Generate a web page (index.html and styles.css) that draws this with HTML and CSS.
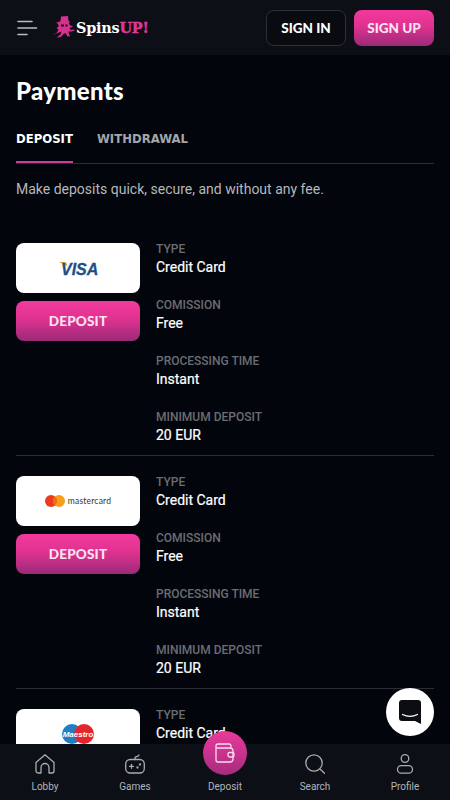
FILE: index.html
```html
<!DOCTYPE html>
<html lang="en">
<head>
    <meta charset="utf-8">
    <meta name="viewport" content="width=device-width, initial-scale=1.0">
    <title>Payments</title>
    <link rel="stylesheet" href="styles.css">
</head>
<body>
    <header class="topbar">
        <svg class="burger" width="22" height="16" viewBox="0 0 22 16" fill="none" stroke="#b9bcc2" stroke-width="1.6" stroke-linecap="round">
            <path d="M1 1.500h14M1 8h18.500M1 14.500h9"/>
        </svg>
        <div class="logo">
            <svg width="23" height="23" viewBox="0 0 23 23" fill="#d6318f">
                <path d="M8 .5l7-.5.500 5 1.500.500-1 1.500 1 2.500 3 .500-2 1.500-1.500.500 1 2 3-.500 1.500 1-3.500 1-3 0 .500 3 1.500 1.500-3 .500-2-3.500-2.500 1.500-2 2.500-4.500.500 4-3 1-3-4 1.500L0 19l4-2.500 1.500-3-2-1.500L6 10 4.500 7.500 3 6.500l3-.500L7.500 5z"/>
                <path d="M8 8.500h3v2H8zM12.500 8.500h2v2h-2z" fill="#0c0f16"/>
            </svg>
            <span class="logo-text">Spins<span class="logo-up">UP!</span></span>
        </div>
        <div class="auth">
            <a class="btn-signin">SIGN IN</a>
            <a class="btn-signup">SIGN UP</a>
        </div>
    </header>

    <main class="content">
        <h1 class="title">Payments</h1>
        <div class="tabs">
            <a class="tab tab-active">DEPOSIT</a>
            <a class="tab">WITHDRAWAL</a>
        </div>
        <p class="intro">Make deposits quick, secure, and without any fee.</p>

        <section class="method">
            <div class="method-left">
                <div class="card-logo">
                    <svg class="visa" width="40" height="16" viewBox="0 0 40 16">
                        <path d="M0 2.500c3-.6 6-.6 7.500.6l1 3.400C6.500 4.500 3.500 3.200 0 2.500z" fill="#eba61f"/>
                        <text x="2" y="14.500" class="visa-text">VISA</text>
                    </svg>
                </div>
                <a class="btn-deposit">DEPOSIT</a>
            </div>
            <dl class="info">
                <div class="info-row"><dt>TYPE</dt><dd>Credit Card</dd></div>
                <div class="info-row"><dt>COMISSION</dt><dd>Free</dd></div>
                <div class="info-row"><dt>PROCESSING TIME</dt><dd>Instant</dd></div>
                <div class="info-row"><dt>MINIMUM DEPOSIT</dt><dd>20 EUR</dd></div>
            </dl>
        </section>

        <section class="method">
            <div class="method-left">
                <div class="card-logo">
                    <svg width="20" height="12" viewBox="0 0 20 12">
                        <circle cx="6" cy="6" r="6" fill="#eb3b1b"/>
                        <circle cx="14" cy="6" r="6" fill="#f79e1b"/>
                        <path d="M10 1.500a6 6 0 0 1 0 9 6 6 0 0 1 0-9z" fill="#f26a14"/>
                    </svg>
                    <span class="mc-text">mastercard</span>
                </div>
                <a class="btn-deposit">DEPOSIT</a>
            </div>
            <dl class="info">
                <div class="info-row"><dt>TYPE</dt><dd>Credit Card</dd></div>
                <div class="info-row"><dt>COMISSION</dt><dd>Free</dd></div>
                <div class="info-row"><dt>PROCESSING TIME</dt><dd>Instant</dd></div>
                <div class="info-row"><dt>MINIMUM DEPOSIT</dt><dd>20 EUR</dd></div>
            </dl>
        </section>

        <section class="method">
            <div class="method-left">
                <div class="card-logo">
                    <svg width="32" height="20" viewBox="0 0 32 20">
                        <circle cx="10" cy="10" r="10" fill="#1f7fc4"/>
                        <circle cx="22" cy="10" r="10" fill="#e3262e"/>
                        <text x="16" y="12.500" class="maestro-text">Maestro</text>
                    </svg>
                </div>
            </div>
            <dl class="info">
                <div class="info-row"><dt>TYPE</dt><dd>Credit Card</dd></div>
            </dl>
        </section>
    </main>

    <a class="chat">
        <svg width="22" height="24" viewBox="0 0 22 24">
            <path d="M3 0h16a3 3 0 0 1 3 3v21l-6-3H3a3 3 0 0 1-3-3V3a3 3 0 0 1 3-3z" fill="#0b0d12"/>
            <path d="M3.500 14.500c4.500 2.200 10.500 2.200 15 0" fill="none" stroke="#fff" stroke-width="1.200" stroke-linecap="round"/>
        </svg>
    </a>

    <nav class="bottombar">
        <a class="nav-item">
            <svg width="20" height="20" viewBox="0 0 20 20" fill="none" stroke="#a9acb2" stroke-width="1.300" stroke-linejoin="round">
                <path d="M1 8.500 10 .8l9 7.700V17a2 2 0 0 1-2 2h-3v-5.500a4 4 0 0 0-8 0V19H3a2 2 0 0 1-2-2z"/>
            </svg>
            <span>Lobby</span>
        </a>
        <a class="nav-item">
            <svg width="20" height="20" viewBox="0 0 20 20" fill="none" stroke="#a9acb2" stroke-width="1.300" stroke-linecap="round">
                <rect x=".7" y="5.500" width="18.600" height="13.500" rx="4.500"/>
                <path d="M10 5.500V4c0-1 .8-1.300 2-1.500s2-.6 2-1.700M4.500 12.300h4M6.500 10.300v4"/>
                <circle cx="12.500" cy="13.500" r=".5"/>
                <circle cx="15" cy="10.500" r=".5"/>
            </svg>
            <span>Games</span>
        </a>
        <a class="nav-item nav-deposit">
            <span class="deposit-circle">
                <svg width="20" height="20" viewBox="0 0 20 20" fill="none" stroke="#fbdcee" stroke-width="1.300" stroke-linejoin="round">
                    <path d="M16 5V3a2 2 0 0 0-2-2H3a2 2 0 0 0-2 2v14a2 2 0 0 0 2 2h12a3 3 0 0 0 3-3V8a3 3 0 0 0-3-3H1"/>
                    <rect x="13" y="9.500" width="6" height="4.500" rx="1.500"/>
                </svg>
            </span>
            <span>Deposit</span>
        </a>
        <a class="nav-item">
            <svg width="20" height="20" viewBox="0 0 20 20" fill="none" stroke="#a9acb2" stroke-width="1.300" stroke-linecap="round">
                <circle cx="9" cy="9" r="8.200"/>
                <path d="M15.500 15.500l4 3.800"/>
            </svg>
            <span>Search</span>
        </a>
        <a class="nav-item">
            <svg width="20" height="20" viewBox="0 0 20 20" fill="none" stroke="#a9acb2" stroke-width="1.300">
                <circle cx="10" cy="4.500" r="3.800"/>
                <rect x="2.500" y="11.700" width="15" height="7.500" rx="3.750"/>
            </svg>
            <span>Profile</span>
        </a>
    </nav>
</body>
</html>
```

FILE: styles.css
```css
html {
    overflow: hidden;
}
body {
    font-family: 'Roboto', sans-serif;
    margin: 0;
    padding: 0;
    height: 800px;
    overflow: hidden;
    background-color: #02050c;
    color: #fff;
}
.topbar {
    height: 55px;
    box-sizing: border-box;
    background-color: #0c0f16;
    display: flex;
    align-items: center;
    padding: 0 16px 0 17px;
}
.burger {
    margin-right: 14px;
}
.logo {
    display: flex;
    align-items: center;
}
.logo-text {
    font-family: 'DejaVu Serif', serif;
    font-weight: 700;
    font-size: 14.400px;
    letter-spacing: -0.2px;
}
.logo-up {
    color: #e0379a;
    font-weight: 700;
    -webkit-text-stroke: 0.4px #e0379a;
}
.auth {
    margin-left: auto;
    display: flex;
    gap: 8px;
}
.btn-signin, .btn-signup {
    width: 80px;
    height: 36px;
    box-sizing: border-box;
    border-radius: 8px;
    display: flex;
    align-items: center;
    justify-content: center;
    font-family: 'Lato', sans-serif;
    font-weight: 900;
    font-size: 13.500px;
}
.btn-signin {
    border: 1px solid #2c3038;
    background-color: #090b11;
}
.btn-signup {
    background: linear-gradient(180deg, #f23a9e 0%, #e0328f 45%, #9a2a78 100%);
    color: #fbe3f1;
}
.content {
    padding: 0 16px;
    height: 745px;
    overflow: hidden;
}
.title {
    font-family: 'Lato', sans-serif;
    font-size: 24px;
    font-weight: 900;
    letter-spacing: 0.3px;
    margin: 23px 0 0;
    line-height: 26px;
}
.tabs {
    display: flex;
    gap: 24px;
    margin-top: 26px;
    border-bottom: 1px solid #2a2d34;
    height: 33px;
}
.tab {
    font-family: 'DejaVu Sans', sans-serif;
    font-size: 11.700px;
    font-weight: 700;
    color: #a3a5aa;
    line-height: 15px;
    padding-top: 2px;
    box-sizing: border-box;
    height: 33px;
}
.tab-active {
    color: #fff;
    border-bottom: 2px solid #c73f8f;
}
.intro {
    font-size: 14px;
    line-height: 20px;
    color: #b6b8bc;
    margin: 15px 0 0;
}
.method {
    display: flex;
    gap: 16px;
    border-bottom: 1px solid #2a2d34;
    height: 212px;
    margin-bottom: 20px;
}
.intro + .method {
    margin-top: 44px;
}
.method-left {
    width: 124px;
    flex-shrink: 0;
    display: flex;
    flex-direction: column;
    gap: 8px;
}
.card-logo {
    height: 50px;
    background-color: #fff;
    border-radius: 8px;
    display: flex;
    align-items: center;
    justify-content: center;
    gap: 3px;
}
.visa {
    margin-left: 2px;
}
.visa-text {
    font-family: 'Liberation Sans', sans-serif;
    font-style: italic;
    font-weight: 700;
    font-size: 16px;
    fill: #1c4f86;
    stroke: #1c4f86;
    stroke-width: 0.3px;
}
.mc-text {
    font-family: 'Lato', sans-serif;
    font-size: 8.500px;
    letter-spacing: 0.2px;
    color: #333;
}
.maestro-text {
    font-family: 'Liberation Sans', sans-serif;
    font-style: italic;
    font-weight: 700;
    font-size: 8px;
    fill: #fff;
    text-anchor: middle;
}
.btn-deposit {
    height: 40px;
    border-radius: 8px;
    background: linear-gradient(180deg, #f23a9e 0%, #e0328f 45%, #9a2a78 100%);
    display: flex;
    align-items: center;
    justify-content: center;
    font-family: 'Lato', sans-serif;
    font-weight: 900;
    font-size: 13.500px;
    letter-spacing: 0.2px;
    color: #fbe3f1;
}
.info {
    margin: 0;
    display: flex;
    flex-direction: column;
    gap: 22px;
}
.info-row dt {
    font-size: 12px;
    font-weight: 500;
    line-height: 12px;
    color: #6b6d73;
}
.info-row dd {
    margin: 3px 0 0;
    font-size: 14px;
    font-weight: 400;
    line-height: 19px;
    color: #fff;
    -webkit-text-stroke: 0.2px #fff;
}
.chat {
    position: absolute;
    left: 386px;
    top: 688px;
    width: 48px;
    height: 48px;
    border-radius: 50%;
    background-color: #fff;
    display: flex;
    align-items: center;
    justify-content: center;
}
.bottombar {
    position: fixed;
    left: 0;
    right: 0;
    bottom: 0;
    height: 56px;
    background-color: #0c0f16;
    display: flex;
}
.nav-item {
    flex: 1;
    display: flex;
    flex-direction: column;
    align-items: center;
    justify-content: flex-end;
    gap: 7px;
    padding-bottom: 8px;
    font-size: 10px;
    line-height: 11px;
    color: #b3b5ba;
}
.nav-deposit {
    position: relative;
}
.deposit-circle {
    position: absolute;
    top: -13px;
    left: 50%;
    margin-left: -22px;
    width: 44px;
    height: 44px;
    border-radius: 50%;
    background: linear-gradient(180deg, #e93a9c, #a72c7e);
    display: flex;
    align-items: center;
    justify-content: center;
}
```
